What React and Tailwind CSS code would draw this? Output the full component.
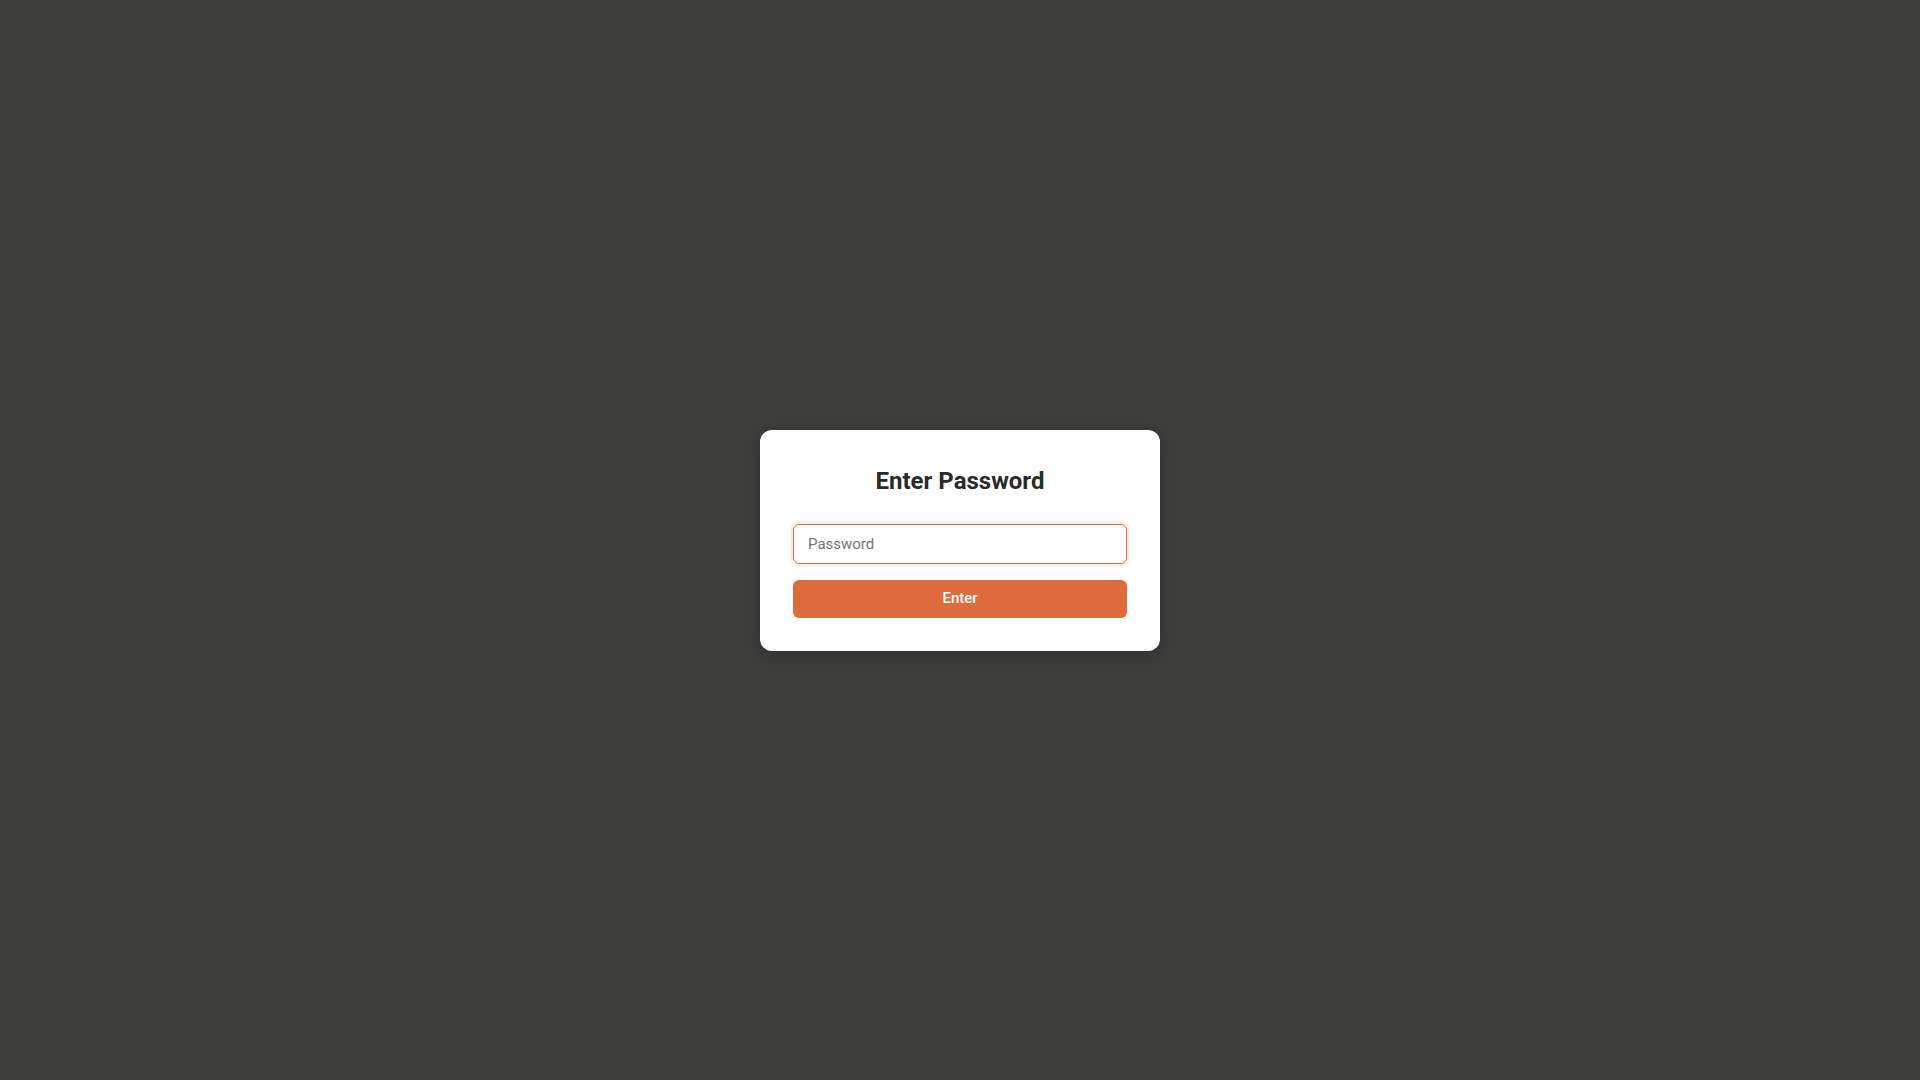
export default function App() {
  return (
    <div className="min-h-screen w-full bg-[#3e3e3c] flex items-center justify-center font-['Roboto',sans-serif]">
      <div className="w-[400px] bg-white rounded-xl px-[33px] py-[33px] shadow-[0_4px_16px_rgba(0,0,0,0.25)]">
        <h1 className="mt-[2px] mb-[27px] text-2xl font-bold text-[#2a2a28] text-center leading-8">Enter Password</h1>
        <input
          type="password"
          placeholder="Password"
          className="block w-full h-10 px-[14px] text-[15px] rounded-md border border-[#dd6b3c] ring-[3px] ring-[#dd6b3c]/10 outline-none placeholder:text-[#757575] text-[#2a2a28]"
        />
        <button className="mt-4 w-full h-[38px] rounded-md bg-[#dd6b3c] text-white text-[15px] font-medium">
          Enter
        </button>
      </div>
    </div>
  )
}
